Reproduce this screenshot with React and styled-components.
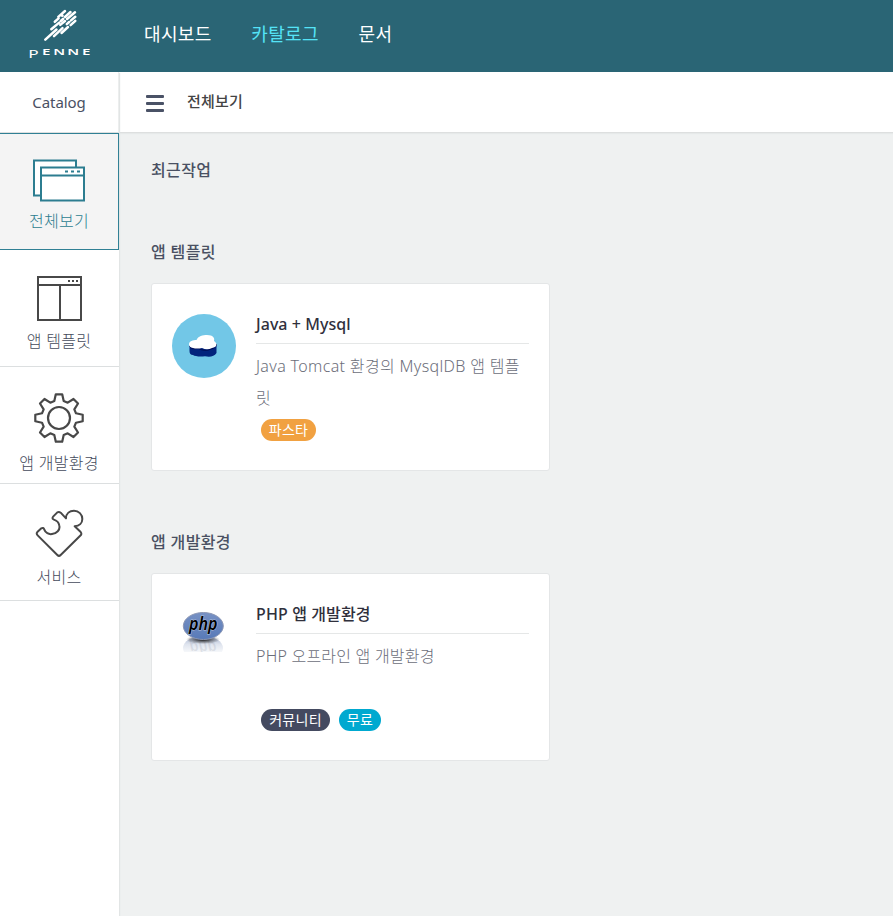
import React from "react";
import styled, { createGlobalStyle, css } from "styled-components";

const Global = createGlobalStyle`
  * { box-sizing: border-box; }
  body { margin: 0; background: #eff1f1; }
  body, text { font-family: "Noto Sans", "Noto Sans CJK KR", sans-serif; }
  h2, h3, p { margin: 0; }
`;

const Page = styled.div`
  display: flex;
  flex-direction: column;
  height: 916px;
  overflow: hidden;
  color: #4a5163;
`;
const Header = styled.header`
  display: flex;
  flex: 0 0 72px;
  background: #2a6575;
`;
const LogoLink = styled.a`
  width: 144px;
  svg { display: block; }
`;
const Nav = styled.nav`
  display: flex;
  gap: 39.6px;
  padding-top: 20px;
`;
const NavLink = styled.a`
  font-size: 18px;
  line-height: 28px;
  letter-spacing: 0.35px;
  white-space: nowrap;
  color: ${(p) => (p.$active ? "#55e3f7" : "#fff")};
`;
const Body = styled.div`
  display: flex;
  flex: 1;
`;
const Sidebar = styled.aside`
  width: 119px;
  background: #fff;
  box-shadow: 1px 1px 1px #e2e5e5;
  z-index: 1;
`;
const barStyles = css`
  height: 61px;
  border-bottom: 1px solid #dddfdf;
  background: #fff;
`;
const SideTitle = styled.div`
  ${barStyles}
  border-right: 1px solid #eceeee;
  font-size: 15px;
  line-height: 61px;
  letter-spacing: -0.05px;
  text-align: center;
`;
const SideItem = styled.a`
  display: flex;
  flex-direction: column;
  align-items: center;
  height: 117px;
  border-bottom: 1px solid #dcdfe0;
  padding: ${(p) => p.$top}px 1px 0 0;
  font-size: 16px;
  font-weight: 300;
  line-height: 24px;
  letter-spacing: 0.25px;
  color: #454b5c;
  ${(p) =>
    p.$active &&
    css`
      border: solid #308094;
      border-width: 1px 1px 1px 0;
      padding-right: 0;
      background: #f4f4f4;
      color: #2c7d90;
    `}
  svg { display: block; flex: none; margin-bottom: ${(p) => p.$gap}px; }
`;
const Main = styled.main`
  flex: 1;
`;
const TitleBar = styled.div`
  ${barStyles}
  display: flex;
  align-items: center;
  gap: 23px;
  padding: 0 0 2px 27px;
  box-shadow: 0 1px 1px #e6e9e9;
  font-size: 15px;
  font-weight: 500;
  line-height: 22px;
  letter-spacing: 0.2px;
  color: #444;
`;
const MenuIcon = styled.span`
  display: grid;
  gap: 4px;
  width: 18px;
  margin-top: 4px;
  i { height: 3px; border-radius: 1px; background: #4a5266; }
`;
const Content = styled.div`
  width: 431px;
  padding: 24px 0 0 32px;
`;
const SectionTitle = styled.h2`
  height: ${(p) => p.$height}px;
  font-size: 16px;
  font-weight: 500;
  line-height: 26px;
  letter-spacing: 0.35px;
  white-space: nowrap;
  color: #4a5163;
`;
const Card = styled.article`
  display: flex;
  gap: 20px;
  width: 399px;
  height: 188px;
  margin-bottom: 58px;
  padding: 30px 20px 0;
  border: 1px solid #e4e6e7;
  border-radius: 3px;
  background: #fff;
  svg { display: block; flex: none; }
`;
const CardText = styled.div`
  width: 273px;
`;
const CardTitle = styled.h3`
  height: 30px;
  border-bottom: 1px solid #e5e7e7;
  font-size: 16px;
  font-weight: 500;
  line-height: 20px;
  letter-spacing: ${(p) => p.$spacing}px;
  color: #30303c;
`;
const Description = styled.p`
  height: 75px;
  padding-top: 6px;
  font-size: 16px;
  font-weight: 300;
  line-height: 32px;
  letter-spacing: ${(p) => p.$spacing}px;
  white-space: pre;
  color: #6c6e7a;
`;
const Tags = styled.div`
  display: flex;
  gap: 9px;
  padding-left: 5px;
`;
const Tag = styled.span`
  width: ${(p) => p.$width}px;
  height: 22px;
  border-radius: 11px;
  background: ${(p) => p.$color};
  color: #fff;
  font-size: 14px;
  line-height: 21px;
  letter-spacing: 0.3px;
  text-align: center;
  white-space: nowrap;
`;

const Logo = () => (
  <svg width="120" height="72" viewBox="0 0 120 72" fill="#fff">
    <g stroke="#fff" strokeWidth="2.5" strokeLinecap="round">
      <path d="M45.3 39.7L56.5 29.5M51.3 29.3L59.2 22.6M54 36.2L62.5 28.2M54.8 21.8L58.6 18.4M58.3 16.9L65 11M60.8 21L63.3 18.8M65 17L70.5 12M60.3 24.9L65 21M67 19L75 12.2M61.5 33L68 27M66.8 24.2L69.2 22M71 20.4L75.3 16.7M62.2 15.8L62.5 15.6M70.6 25.2L75.3 20.8" />
    </g>
    <g fontSize="8.6" fontWeight="600">
      <text transform="translate(28.2 57.5) scale(1.5 1)" fontSize="11.5" fontWeight="400">P</text>
      <text transform="translate(42 55) scale(1.75 1)" x="0 6.4 14.4 22.9">ENNE</text>
    </g>
  </svg>
);

const WindowsIcon = () => (
  <svg width="54" height="44" viewBox="0 0 54 44" fill="#fff" stroke="#2c7d90" strokeWidth="2">
    <path d="M2 1.5H44V36.5H2Z" />
    <path d="M9 8.5H52V41.5H9ZM9 16.5H52" />
    <path d="M33 12.5H48" strokeDasharray="3" />
  </svg>
);

const TemplateIcon = () => (
  <svg width="46" height="46" viewBox="0 0 46 46" fill="none" stroke="#484848" strokeWidth="2">
    <path d="M2 1H45V44H2ZM2 9H45M24 9V44" />
    <path d="M32 5H42" strokeDasharray="2" />
  </svg>
);

const tooth = [[-4.7, -17], [-3.2, -23.7], [3.2, -23.7], [4.7, -17]];
const gearPoints = Array.from({ length: 8 }, (_, i) => {
  const a = (i * Math.PI) / 4;
  return tooth
    .map(([x, y]) => [
      (x * Math.cos(a) - y * Math.sin(a)).toFixed(2),
      (x * Math.sin(a) + y * Math.cos(a)).toFixed(2),
    ].join(","))
    .join(" ");
}).join(" ");

const GearIcon = () => (
  <svg width="52" height="52" viewBox="-26 -26 52 52" fill="none" stroke="#484848" strokeWidth="2.2" strokeLinejoin="round">
    <polygon points={gearPoints} />
    <circle r="11" />
  </svg>
);

const PuzzleIcon = () => (
  <svg width="50" height="50" viewBox="102 84 150 150" fill="none" stroke="#484848" strokeWidth="6" strokeLinejoin="round">
    <path d="M112 156L124 145Q130 141 133 149C136 158 146 164 156 162C170 160 181 150 178 137C177 128 170 121 160 118Q155 114 160 109L172 97Q177 94 182 98L198 115C198 100 209 92 222 92C236 92 247 103 247 117C247 129 238 138 224 139L242 156Q246 161 242 166L182 225Q177 230 172 225L113 166Q108 161 112 156Z" />
  </svg>
);

const CloudBadge = () => (
  <svg width="64" height="64" viewBox="0 0 64 64">
    <circle cx="32" cy="32" r="32" fill="#72c7e7" />
    <path d="M17.5 31H44.5V39Q41 44 33 42.3Q24 43 21 41Q17.5 41 17.5 37Z" fill="#02237c" />
    <path d="M17.5 32Q19 36 26 34.3Q33 38 39 35Q44.5 34 44.5 30" fill="none" stroke="#000b50" />
    <path d="M17 30.5C17 27 21 26 24.5 26C26 22 31 21 35 21C41 21 43 24 42 27C46 30 45 33 40 34Q35 36.5 30 34Q25 35 21 34Q17 33 17 30.5Z" fill="#fff" />
  </svg>
);

const PhpBadge = () => (
  <svg width="64" height="64" viewBox="0 0 64 64">
    <defs>
      <linearGradient id="php-fade" x1="0" y1="0" x2="0" y2="1">
        <stop offset="0" stopColor="#a8b5d2" />
        <stop offset=".35" stopColor="#dfe4ee" />
        <stop offset=".8" stopColor="#fff" />
      </linearGradient>
      <linearGradient id="php-blue" x1="0" y1="0" x2="0" y2="1">
        <stop offset="0" stopColor="#7791c4" />
        <stop offset="1" stopColor="#587ab8" />
      </linearGradient>
      <radialGradient id="php-shadow">
        <stop offset="0" stopColor="#111" />
        <stop offset="1" stopColor="#222" stopOpacity="0" />
      </radialGradient>
      <clipPath id="php-mirror"><path d="M0 34H64V48H0Z" /></clipPath>
    </defs>
    <g clipPath="url(#php-mirror)">
      <ellipse cx="31" cy="44" rx="20" ry="12" fill="url(#php-fade)" />
      <text transform="translate(17.5 34) scale(1 -1)" y="-4" fontSize="17" fontStyle="italic" fontWeight="500" fill="#8b91a0" opacity=".2" textLength="27" lengthAdjust="spacingAndGlyphs">php</text>
    </g>
    <ellipse cx="31" cy="35.5" rx="17" ry="4.5" fill="url(#php-shadow)" />
    <ellipse cx="31.3" cy="22" rx="20" ry="13.5" fill="url(#php-blue)" stroke="#8d98b5" />
    <text x="17" y="25.6" fontSize="17" fontStyle="italic" fontWeight="600" stroke="#b9c5de" strokeWidth="1" paintOrder="stroke" textLength="28.5" lengthAdjust="spacingAndGlyphs">php</text>
  </svg>
);

const sideItems = [
  { label: "전체보기", Icon: WindowsIcon, top: 25, gap: 6, active: true },
  { label: "앱 템플릿", Icon: TemplateIcon, top: 26, gap: 7 },
  { label: "앱 개발환경", Icon: GearIcon, top: 25, gap: 7 },
  { label: "서비스", Icon: PuzzleIcon, top: 24, gap: 7 },
];

const cards = [
  {
    section: "앱 템플릿", title: "Java + Mysql", titleSpacing: 0.05,
    text: "Java Tomcat 환경의 MysqlDB 앱 템플\n릿", textSpacing: 0.34, Badge: CloudBadge,
    tags: [["파스타", "#f1a141", 55]],
  },
  {
    section: "앱 개발환경", title: "PHP 앱 개발환경", titleSpacing: 0.12,
    text: "PHP 오프라인 앱 개발환경", textSpacing: 0.22, Badge: PhpBadge,
    tags: [["커뮤니티", "#444a60", 69], ["무료", "#00a9d0", 42]],
  },
];

export default function App() {
  return (
    <Page>
      <Global />
      <Header>
        <LogoLink><Logo /></LogoLink>
        <Nav>
          <NavLink>대시보드</NavLink>
          <NavLink $active>카탈로그</NavLink>
          <NavLink>문서</NavLink>
        </Nav>
      </Header>
      <Body>
        <Sidebar>
          <SideTitle>Catalog</SideTitle>
          {sideItems.map(({ label, Icon, top, gap, active }) => (
            <SideItem key={label} $top={top} $gap={gap} $active={active}>
              <Icon />
              {label}
            </SideItem>
          ))}
        </Sidebar>
        <Main>
          <TitleBar>
            <MenuIcon><i /><i /><i /></MenuIcon>
            전체보기
          </TitleBar>
          <Content>
            <SectionTitle $height={82}>최근작업</SectionTitle>
            {cards.map((c) => (
              <section key={c.title}>
                <SectionTitle $height={44}>{c.section}</SectionTitle>
                <Card>
                  <c.Badge />
                  <CardText>
                    <CardTitle $spacing={c.titleSpacing}>{c.title}</CardTitle>
                    <Description $spacing={c.textSpacing}>{c.text}</Description>
                    <Tags>
                      {c.tags.map(([name, color, width]) => (
                        <Tag key={name} $color={color} $width={width}>{name}</Tag>
                      ))}
                    </Tags>
                  </CardText>
                </Card>
              </section>
            ))}
          </Content>
        </Main>
      </Body>
    </Page>
  );
}
